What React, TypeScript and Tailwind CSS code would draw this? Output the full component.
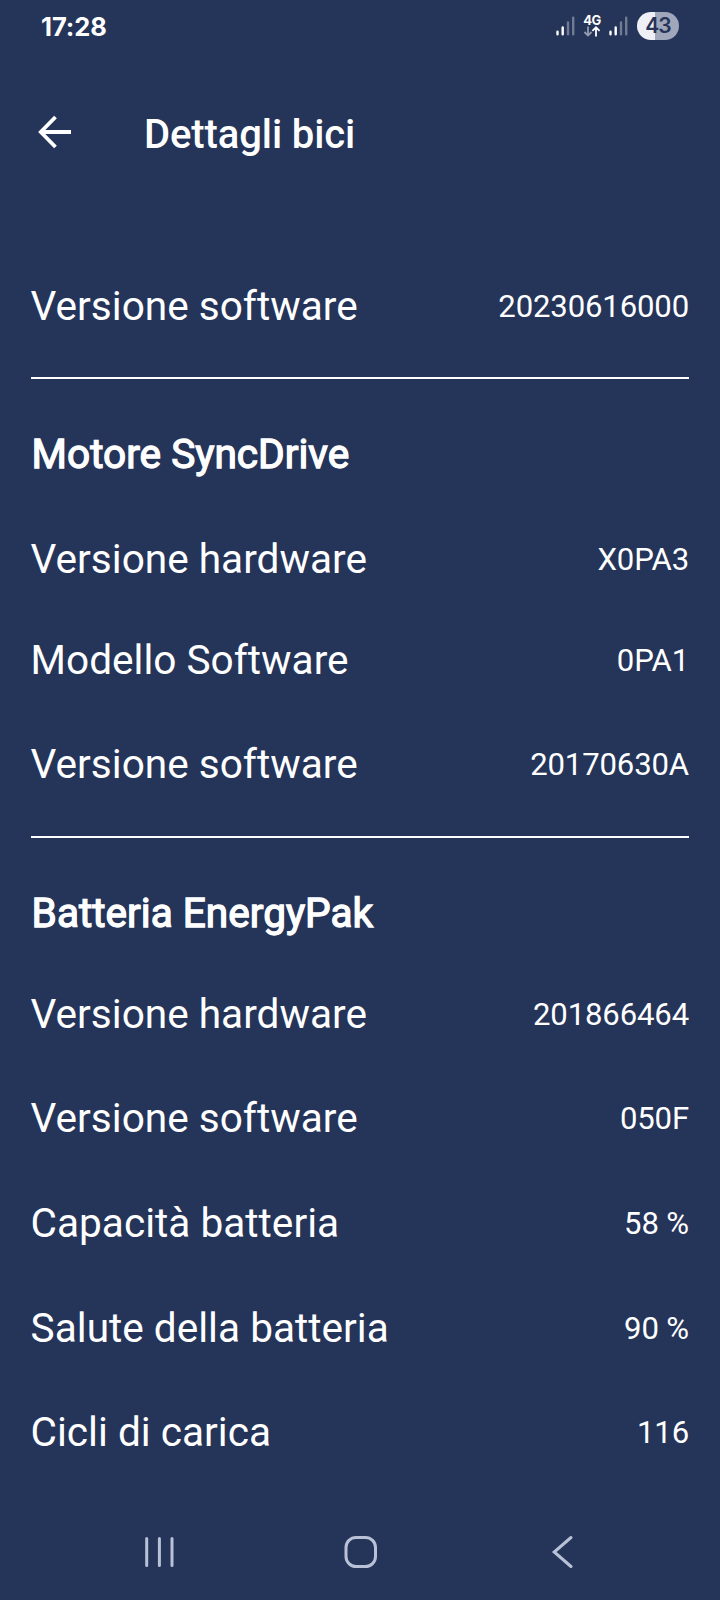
type RowProps = { label: string; value: string; className?: string };

const Row = ({ label, value, className = "mt-[56.7px]" }: RowProps) => (
  <div className={`flex h-[48px] items-center justify-between ${className}`}>
    <span className="text-[40.6px] leading-[48px]">{label}</span>
    <span className="pt-[2px] text-[31.1px] leading-[48px] tracking-[-0.14px]">{value}</span>
  </div>
);

const Heading = ({ children }: { children: string }) => (
  <h2 className="mt-[51px] h-[48px] pl-px text-[40.6px] leading-[48px] [-webkit-text-stroke:1.3px_white]">
    {children}
  </h2>
);

const Signal = () => (
  <svg width="19" height="20" viewBox="0 0 19 20" strokeWidth="2.4" strokeLinecap="round" stroke="#fff">
    <path d="M1.5 15.8V18.2M6.7 11.5V18.2" />
    <path d="M12 6.5V18.2M17.2 1.7V18.2" opacity="0.35" />
  </svg>
);

const StatusBar = () => (
  <header className="flex h-[52px] items-center justify-between pr-[41px] pl-[41px]">
    <span className="pt-[2px] font-['Inter',sans-serif] text-[25.5px] font-bold tracking-[-0.1px]">17:28</span>
    <div className="flex items-center">
      <Signal />
      <div className="ml-[8px] flex w-[18px] flex-col items-center">
        <span className="font-['Inter',sans-serif] text-[13px] leading-[11px] font-bold tracking-[-0.5px]">4G</span>
        <svg width="18" height="11" viewBox="0 0 18 11" fill="none" strokeWidth="1.8">
          <path d="M5 0.5V9.3M1.4 6L5 9.5L8.6 6" stroke="#fff" opacity="0.5" />
          <path d="M13 10.5V1.5M9.4 4.8L13 1.3L16.6 4.8" stroke="#fff" />
        </svg>
      </div>
      <div className="ml-[8px]">
        <Signal />
      </div>
      <div className="ml-[9px] flex h-[28px] w-[42px] items-center justify-center rounded-full bg-[linear-gradient(to_right,#eef0f5_43%,#a0a7bb_43%)]">
        <span className="font-['Inter',sans-serif] text-[21px] font-semibold tracking-[-0.8px] text-[#263459]">43</span>
      </div>
    </div>
  </header>
);

const Divider = ({ className }: { className: string }) => (
  <hr className={`h-[2px] border-0 bg-white ${className}`} />
);

export default function App() {
  return (
    <div className="flex h-[1600px] w-[720px] flex-col bg-[#253459] font-['Roboto',sans-serif] text-white">
      <StatusBar />
      <div className="flex h-[164px] items-center pl-[38px]">
        <svg className="mb-[4px]" width="34" height="34" viewBox="0 0 34 34" fill="none" stroke="#fff" strokeWidth="3.8">
          <path d="M33 17H3M17.5 2L2.8 17L17.5 32" />
        </svg>
        <h1 className="mt-[2px] pl-[72px] text-[40px] font-medium tracking-[-0.1px]">Dettagli bici</h1>
      </div>

      <main className="flex-1 pr-[31px] pl-[30.6px]">
        <Row label="Versione software" value="20230616000" className="mt-[66px]" />
        <Divider className="mt-[47px]" />
        <Heading>Motore SyncDrive</Heading>
        <Row label="Versione hardware" value="X0PA3" />
        <Row label="Modello Software" value="0PA1" className="mt-[53px]" />
        <Row label="Versione software" value="20170630A" />
        <Divider className="mt-[47.6px]" />
        <Heading>Batteria EnergyPak</Heading>
        <Row label="Versione hardware" value="201866464" className="mt-[52.7px]" />
        <Row label="Versione software" value="050F" />
        <Row label="Capacità batteria" value="58 %" />
        <Row label="Salute della batteria" value="90 %" />
        <Row label="Cicli di carica" value="116" />
      </main>

      <nav className="flex h-[80px] items-start pt-[15px] pl-[144px]">
        <svg width="31" height="34" viewBox="0 0 31 34" stroke="#b9c1d6" strokeWidth="3" strokeLinecap="round">
          <path d="M2.7 3.5V30.5M15.4 3.5V30.5M28 3.5V30.5" />
        </svg>
        <svg className="ml-[169px]" width="34" height="34" viewBox="0 0 34 34" fill="none" stroke="#b9c1d6" strokeWidth="3">
          <rect x="2" y="2.5" width="29.5" height="29" rx="10" />
        </svg>
        <svg className="ml-[173px]" width="22" height="34" viewBox="0 0 22 34" fill="none" stroke="#b9c1d6" strokeWidth="3" strokeLinecap="round">
          <path d="M20 2.5L3.2 17L20 31.5" />
        </svg>
      </nav>
    </div>
  );
}
